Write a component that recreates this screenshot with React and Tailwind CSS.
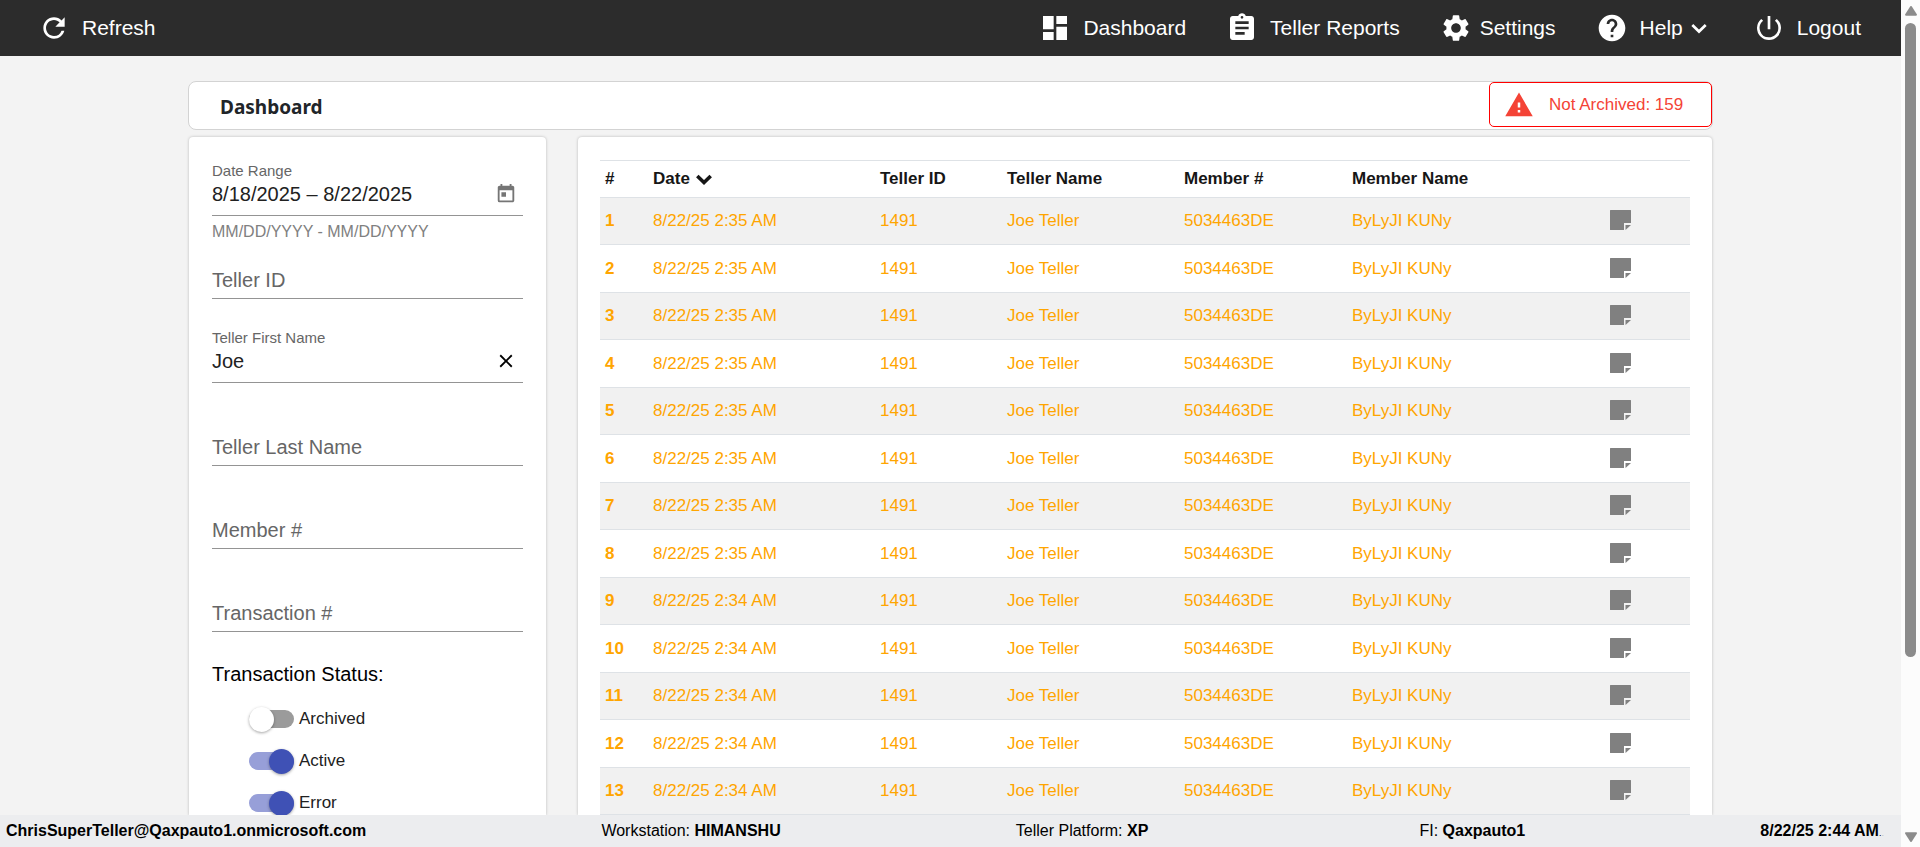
import React, { useState } from "react";
import {
  MdRefresh,
  MdDashboard,
  MdAssignment,
  MdSettings,
  MdHelp,
  MdPowerSettingsNew,
  MdWarning,
  MdToday,
  MdClose,
} from "react-icons/md";

const rows = Array.from({ length: 13 }, (_, i) => ({
  n: i + 1,
  date: i < 8 ? "8/22/25 2:35 AM" : "8/22/25 2:34 AM",
  tellerId: "1491",
  teller: "Joe Teller",
  member: "5034463DE",
  name: "ByLyJI KUNy",
}));

function Chevron({ thickness }) {
  return (
    <svg viewBox="0 0 16 11" className="h-[11px] w-4" fill="none" aria-hidden="true">
      <path d="M1.300 2 8 8.500 14.700 2" stroke="currentColor" strokeWidth={thickness} />
    </svg>
  );
}

function NoteIcon() {
  return (
    <svg viewBox="0 0 21 20" className="h-5 w-[21px]" fill="#808080" aria-hidden="true">
      <path d="M.5 0h20a.5.5 0 0 1 .5.5V13h-7v7H.5a.5.5 0 0 1-.5-.5V.5A.5.5 0 0 1 .5 0Z" />
      <path d="M15.500 15H21L15.500 20Z" />
    </svg>
  );
}

function NavLink({ icon: Icon, gap, children }) {
  return (
    <a href="#" className={`flex items-center ${gap}`}>
      <Icon className="size-8" aria-hidden="true" />
      <span>{children}</span>
    </a>
  );
}

function EmptyField({ id, label, className }) {
  return (
    <div className={`grid content-end border-b border-[#949494] pb-1 ${className}`}>
      <input
        id={id}
        placeholder=" "
        className="peer col-start-1 row-start-1 h-7 w-full bg-transparent text-xl text-[#212121] outline-none"
      />
      <label
        htmlFor={id}
        className="invisible col-start-1 row-start-1 text-xl leading-7 text-[#666] peer-placeholder-shown:visible"
      >
        {label}
      </label>
    </div>
  );
}

function Toggle({ label, initial }) {
  const [on, setOn] = useState(initial);
  return (
    <label className="flex h-[42px] items-center gap-[5px] text-[17px] text-[#212121]">
      <input type="checkbox" checked={on} onChange={() => setOn(!on)} className="peer sr-only" />
      <span className={`flex h-[18px] w-[45px] items-center rounded-full ${on ? "justify-end bg-[#979fd8]" : "justify-start bg-[#9b9b9b]"}`}>
        <span className={`size-[25px] rounded-full shadow-[0_1px_3px_rgba(0,0,0,0.35)] ${on ? "bg-[#3f51b5]" : "bg-white"}`} />
      </span>
      {label}
    </label>
  );
}

function Filters() {
  return (
    <section className="w-[357px] shrink-0 rounded-t bg-white px-[23px] pt-6 shadow-[0_0_3px_rgba(0,0,0,0.25)]">
      <div className="border-b border-[#949494] pb-2">
        <label htmlFor="range" className="block text-[15px] leading-5 text-[#666]">Date Range</label>
        <div className="flex h-[26px] items-center">
          <input id="range" defaultValue="8/18/2025 – 8/22/2025" className="h-6 min-w-0 flex-1 bg-transparent text-xl text-[#212121] outline-none" />
          <button aria-label="Open calendar" className="mr-1.5 text-[#757575]"><MdToday className="size-[22px]" /></button>
        </div>
      </div>
      <p className="pt-1.5 text-base leading-5 text-[#808080]">MM/DD/YYYY - MM/DD/YYYY</p>
      <EmptyField id="tid" label="Teller ID" className="h-[57px]" />
      <div className="mt-[29px] border-b border-[#949494] pb-2">
        <label htmlFor="first" className="block text-[15px] leading-5 text-[#666]">Teller First Name</label>
        <div className="flex h-[26px] items-center">
          <input id="first" defaultValue="Joe" className="h-6 min-w-0 flex-1 bg-transparent text-xl text-[#212121] outline-none" />
          <button aria-label="Clear" className="mr-1.5 text-black"><MdClose className="size-[22px]" /></button>
        </div>
      </div>
      <EmptyField id="last" label="Teller Last Name" className="h-[83px]" />
      <EmptyField id="member" label="Member #" className="h-[83px]" />
      <EmptyField id="transaction" label="Transaction #" className="h-[83px]" />
      <fieldset>
        <legend className="pt-7 text-xl leading-7 text-black">Transaction Status:</legend>
        <div className="pt-2.5 pl-[37px]">
          <Toggle label="Archived" initial={false} />
          <Toggle label="Active" initial />
          <Toggle label="Error" initial />
        </div>
      </fieldset>
    </section>
  );
}

function Transactions() {
  return (
    <section className="min-w-0 flex-1 rounded-t bg-white px-[22px] pt-[23px] shadow-[0_0_3px_rgba(0,0,0,0.25)]">
      <table className="w-full table-fixed border-separate border-spacing-0 text-left text-[17px] leading-6">
        <thead className="text-[#161616]">
          <tr className="h-[38px] [&>*]:border-y [&>*]:border-[#dee2e6] [&>*]:px-[5px] [&>*]:font-bold">
            <th className="w-[48px]">#</th>
            <th className="w-[227px]">
              <button className="flex items-center gap-1.5 font-bold">
                Date <Chevron thickness="3.6" />
              </button>
            </th>
            <th className="w-[127px]">Teller ID</th>
            <th className="w-[177px]">Teller Name</th>
            <th className="w-[168px]">Member #</th>
            <th className="w-[254px]">Member Name</th>
            <td className="w-[89px]" />
          </tr>
        </thead>
        <tbody className="text-[#ffa500]">
          {rows.map((r) => (
            <tr key={r.n} className="odd:h-[47px] odd:bg-[#f1f1f1] even:h-[48px] [&>*]:border-b [&>*]:border-[#dee2e6] [&>*]:px-[5px]">
              <th scope="row" className="font-bold">{r.n}</th>
              <td>{r.date}</td>
              <td>{r.tellerId}</td>
              <td>{r.teller}</td>
              <td>{r.member}</td>
              <td>{r.name}</td>
              <td>
                <button aria-label="View note" className="ml-1 block pb-0.5"><NoteIcon /></button>
              </td>
            </tr>
          ))}
        </tbody>
      </table>
    </section>
  );
}

function RailArrow({ className }) {
  return (
    <svg viewBox="0 0 12 10" className={`h-2.5 w-3 ${className}`} fill="#8b8b8b">
      <path d="M5 .7a1.200 1.200 0 0 1 2 0l4.800 7.500c.4.700 0 1.500-.8 1.500H1C.2 9.700-.2 8.900.2 8.200Z" />
    </svg>
  );
}

function ScrollRail() {
  return (
    <div className="flex w-[19px] shrink-0 flex-col items-center gap-[7px] bg-[#fcfcfc] pt-1.5 pb-[5px]" aria-hidden="true">
      <RailArrow className="" />
      <div className="min-h-0 w-full flex-1">
        <div className="mx-auto h-[79%] w-[11px] rounded-full bg-[#8b8b8b]" />
      </div>
      <RailArrow className="rotate-180" />
    </div>
  );
}

export default function App() {
  return (
    <div className="flex h-screen overflow-hidden bg-[#f3f3f3] font-['Liberation_Sans',Arial,sans-serif]">
      <div className="flex min-w-0 flex-1 flex-col">
        <header className="flex h-14 shrink-0 items-center justify-between bg-[#2c2c2c] pr-10 pl-[38px] text-[21px] text-white">
          <NavLink icon={MdRefresh} gap="gap-3">Refresh</NavLink>
          <nav className="flex items-center gap-10">
            <NavLink icon={MdDashboard} gap="gap-3">Dashboard</NavLink>
            <NavLink icon={MdAssignment} gap="gap-3">Teller Reports</NavLink>
            <NavLink icon={MdSettings} gap="gap-2">Settings</NavLink>
            <button className="mr-1.5 flex items-center gap-3">
              <MdHelp className="size-8" aria-hidden="true" />
              <span className="flex items-center gap-2">Help <Chevron thickness="2.7" /></span>
            </button>
            <NavLink icon={MdPowerSettingsNew} gap="gap-3">Logout</NavLink>
          </nav>
        </header>

        <main className="flex min-h-0 flex-1 flex-col overflow-hidden px-[188px] pt-[25px]">
          <div className="flex h-[49px] shrink-0 items-start justify-between rounded-lg border border-[#d3d3d3] bg-white">
            <h1 className="pt-[11px] pl-[31px] font-['Noto_Sans',sans-serif] text-[19px] leading-7 font-bold text-[#212529]">Dashboard</h1>
            <button className="flex h-[45px] w-[223px] items-center gap-[15px] rounded-[5px] border border-[#f00] pl-[14px] text-[17px] text-[#f44336]">
              <MdWarning className="size-[30px]" aria-hidden="true" />
              Not Archived: 159
            </button>
          </div>
          <div className="mt-[7px] flex min-h-0 flex-1 items-stretch gap-8 px-px">
            <Filters />
            <Transactions />
          </div>
        </main>

        <footer className="flex h-8 shrink-0 items-center justify-between bg-[#ecedef] pr-[17px] pl-1.5 text-base text-black">
          <b>ChrisSuperTeller@Qaxpauto1.onmicrosoft.com</b>
          <span>Workstation: <b>HIMANSHU</b></span>
          <span className="pr-9">Teller Platform: <b>XP</b></span>
          <span>FI: <b>Qaxpauto1</b></span>
          <span><b>8/22/25 2:44 AM</b><small className="text-[9px]">.</small><small className="text-[9px] text-[#bbb]">.</small></span>
        </footer>
      </div>
      <ScrollRail />
    </div>
  );
}
